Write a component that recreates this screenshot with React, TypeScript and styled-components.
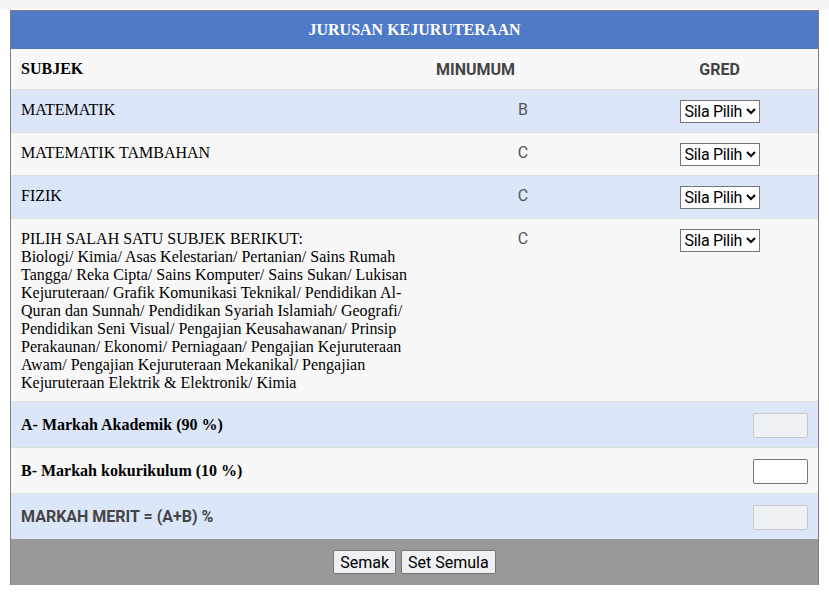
import { createGlobalStyle, styled } from "styled-components"

const Global = createGlobalStyle`
    html, body {
        margin: 0;
        padding: 0;
        min-height: 100%;
    }
    body {
        background: #ffffff linear-gradient(#f3f3f3 0, #f3f3f3 8px, #ffffff 10px) no-repeat;
        background-size: 100% 10px;
    }
`

const Page = styled.div`
    padding: 10px 10px 0 10px;
`

const Table = styled.div`
    width: 809px;
    box-sizing: border-box;
    border-top: 1px solid #808080;
    border-left: 1px solid #808080;
    border-right: 1px solid #808080;
    font-family: "Liberation Serif", "Times New Roman", serif;
    font-size: 16px;
    color: #000;
`

const Title = styled.div`
    height: 38px;
    background: #4f7ac8;
    color: #fff;
    font-weight: bold;
    font-size: 16px;
    display: flex;
    align-items: center;
    justify-content: center;
`

const HeadRow = styled.div`
    display: grid;
    grid-template-columns: 319px 291px 1fr;
    align-items: center;
    height: 40px;
    background: #f8f8f8;
`

const HeadCell = styled.div<{ $sans?: boolean }>`
    padding: 0 10px;
    font-weight: bold;
    text-align: ${p => (p.$sans ? "center" : "left")};
    font-family: ${p => (p.$sans ? "Roboto, Arial, sans-serif" : "inherit")};
    color: ${p => (p.$sans ? "#444" : "#000")};
`

const Row = styled.div<{ $alt?: boolean }>`
    display: grid;
    grid-template-columns: 410px 200px 1fr;
    align-items: start;
    border-top: 1px solid #dcdcdc;
    background: ${p => (p.$alt ? "#dce6f9" : "#f8f8f8")};
    padding: 10px 0 9px 0;
`

const Subject = styled.div`
    padding: 1px 10px 0 10px;
    line-height: 18px;
`

const Min = styled.div`
    padding-top: 1px;
    line-height: 18px;
    text-align: center;
    font-family: Roboto, Arial, sans-serif;
    color: #555;
    padding-left: 4px;
`

const GradeCell = styled.div`
    display: flex;
    justify-content: center;
`

const Select = styled.select`
    width: 80px;
    height: 23px;
    font-family: Roboto, Arial, sans-serif;
    font-size: 16px;
    letter-spacing: -0.3px;
    border: 1px solid #767676;
    border-radius: 0;
    background: #fff;
    color: #000;
    padding: 0;
`

const MarkRow = styled.div<{ $alt?: boolean }>`
    display: flex;
    align-items: center;
    justify-content: space-between;
    height: 45px;
    padding: 0 10px;
    border-top: 1px solid #dcdcdc;
    background: ${p => (p.$alt ? "#dce6f9" : "#f8f8f8")};
`

const MarkLabel = styled.div<{ $sans?: boolean }>`
    font-weight: bold;
    font-family: ${p => (p.$sans ? "Roboto, Arial, sans-serif" : "inherit")};
    color: ${p => (p.$sans ? "#444" : "#000")};
`

const MarkInput = styled.input`
    width: 55px;
    height: 25px;
    box-sizing: border-box;
    border: 1px solid ${p => (p.disabled ? "#c8c8c8" : "#767676")};
    border-radius: 2px;
    background: ${p => (p.disabled ? "#eef0f4" : "#fff")};
    margin-top: 2px;
`

const Footer = styled.div`
    height: 46px;
    background: #999999;
    display: flex;
    align-items: center;
    justify-content: center;
    gap: 5px;
`

const Button = styled.button`
    height: 24px;
    padding: 0 6px;
    font-family: Roboto, Arial, sans-serif;
    font-size: 16px;
    color: #000;
    background: #eff0f4;
    border: 1px solid #767676;
    border-radius: 2px;
`

type Subj = { name: string; min: string; extra?: string }

const subjects: Subj[] = [
    { name: "MATEMATIK", min: "B" },
    { name: "MATEMATIK TAMBAHAN", min: "C" },
    { name: "FIZIK", min: "C" },
    {
        name: "PILIH SALAH SATU SUBJEK BERIKUT:",
        min: "C",
        extra: "Biologi/ Kimia/ Asas Kelestarian/ Pertanian/ Sains Rumah Tangga/ Reka Cipta/ Sains Komputer/ Sains Sukan/ Lukisan Kejuruteraan/ Grafik Komunikasi Teknikal/ Pendidikan Al-Quran dan Sunnah/ Pendidikan Syariah Islamiah/ Geografi/ Pendidikan Seni Visual/ Pengajian Keusahawanan/ Prinsip Perakaunan/ Ekonomi/ Perniagaan/ Pengajian Kejuruteraan Awam/ Pengajian Kejuruteraan Mekanikal/ Pengajian Kejuruteraan Elektrik & Elektronik/ Kimia",
    },
]

export default function App() {
    return (
        <Page>
            <Global />
            <Table>
                <Title>JURUSAN KEJURUTERAAN</Title>
                <HeadRow>
                    <HeadCell>SUBJEK</HeadCell>
                    <HeadCell $sans>MINUMUM</HeadCell>
                    <HeadCell $sans>GRED</HeadCell>
                </HeadRow>
                {subjects.map((s, i) => (
                    <Row key={i} $alt={i % 2 === 0}>
                        <Subject>
                            {s.name}
                            {s.extra && <><br />{s.extra}</>}
                        </Subject>
                        <Min>{s.min}</Min>
                        <GradeCell>
                            <Select defaultValue="">
                                <option value="">Sila Pilih</option>
                                <option>A+</option>
                                <option>A</option>
                                <option>A-</option>
                                <option>B+</option>
                                <option>B</option>
                                <option>C+</option>
                                <option>C</option>
                            </Select>
                        </GradeCell>
                    </Row>
                ))}
                <MarkRow $alt>
                    <MarkLabel>A- Markah Akademik (90 %)</MarkLabel>
                    <MarkInput disabled />
                </MarkRow>
                <MarkRow>
                    <MarkLabel>B- Markah kokurikulum (10 %)</MarkLabel>
                    <MarkInput />
                </MarkRow>
                <MarkRow $alt>
                    <MarkLabel $sans>MARKAH MERIT = (A+B) %</MarkLabel>
                    <MarkInput disabled />
                </MarkRow>
                <Footer>
                    <Button>Semak</Button>
                    <Button>Set Semula</Button>
                </Footer>
            </Table>
        </Page>
    )
}
